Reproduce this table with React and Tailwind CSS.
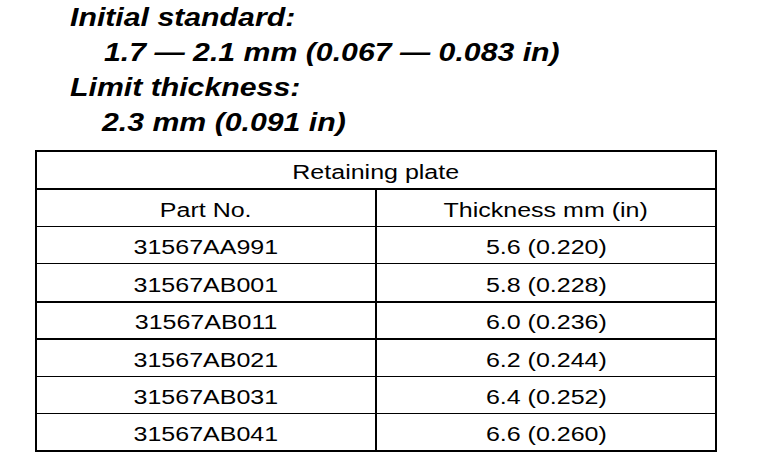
import React from "react"

const rows = [
    ["31567AA991", "5.6 (0.220)", "border-t", "h-[37px]"],
    ["31567AB001", "5.8 (0.228)", "border-t", "h-[38px]"],
    ["31567AB011", "6.0 (0.236)", "border-t-2", "h-[37px]"],
    ["31567AB021", "6.2 (0.244)", "border-t-2", "h-[38px]"],
    ["31567AB031", "6.4 (0.252)", "border-t", "h-[37px]"],
    ["31567AB041", "6.6 (0.260)", "border-t", "h-[37px]"],
]

function Cell({ children, className = "" }) {
    return (
        <div className={"flex-1 flex items-end justify-center pb-[4px] " + className}>
            <span className="inline-block scale-x-[1.25] origin-center">{children}</span>
        </div>
    )
}

function App() {
    return (
        <div className="w-[768px] h-[464px] bg-white text-black overflow-hidden" style={{ fontFamily: '"Liberation Sans", Arial, sans-serif' }}>
            <div className="pl-[70px] text-[25px] leading-[35px] font-bold italic">
                <div><span className="inline-block scale-x-[1.21] origin-left">Initial standard:</span></div>
                <div className="pl-[34px]"><span className="inline-block scale-x-[1.21] origin-left">1.7 — 2.1 mm (0.067 — 0.083 in)</span></div>
                <div><span className="inline-block scale-x-[1.21] origin-left">Limit thickness:</span></div>
                <div className="pl-[32px]"><span className="inline-block scale-x-[1.21] origin-left">2.3 mm (0.091 in)</span></div>
            </div>

            <div className="ml-[35px] mt-[10px] w-[682px] border-2 border-black text-[20px] leading-[24px]">
                <div className="h-[36px] flex">
                    <Cell>Retaining plate</Cell>
                </div>
                <div className="h-[38px] flex border-t-2 border-black">
                    <Cell className="border-r-2 border-black">Part No.</Cell>
                    <Cell>Thickness mm (in)</Cell>
                </div>
                {rows.map(([part, thick, line, h]) => (
                    <div key={part} className={"flex border-black " + line + " " + h}>
                        <Cell className="border-r-2 border-black">{part}</Cell>
                        <Cell>{thick}</Cell>
                    </div>
                ))}
            </div>
        </div>
    )
}

export default App
